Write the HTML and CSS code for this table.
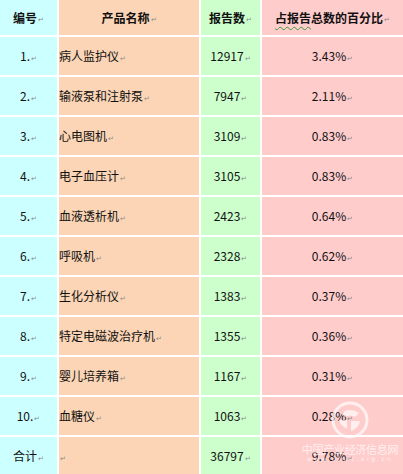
FILE: index.html
```html
<!DOCTYPE html>
<html>
<head>
<meta charset="utf-8">
<link rel="stylesheet" href="styles.css">
</head>
<body>
<div class="page">
  <div class="grid">
    <div class="c c1 head">编号<span class="pm">↵</span></div>
    <div class="c c2 head center">产品名称<span class="pm">↵</span></div>
    <div class="c c3 head">报告数<span class="pm">↵</span></div>
    <div class="c c4 head"><span class="wavy">占报告</span>总数的百分比<span class="pm">↵</span></div>

    <div class="c c1">1.<span class="pm">↵</span></div>
    <div class="c c2">病人监护仪<span class="pm">↵</span></div>
    <div class="c c3">12917<span class="pm">↵</span></div>
    <div class="c c4">3.43%<span class="pm">↵</span></div>

    <div class="c c1">2.<span class="pm">↵</span></div>
    <div class="c c2">输液泵和注射泵<span class="pm">↵</span></div>
    <div class="c c3">7947<span class="pm">↵</span></div>
    <div class="c c4">2.11%<span class="pm">↵</span></div>

    <div class="c c1">3.<span class="pm">↵</span></div>
    <div class="c c2">心电图机<span class="pm">↵</span></div>
    <div class="c c3">3109<span class="pm">↵</span></div>
    <div class="c c4">0.83%<span class="pm">↵</span></div>

    <div class="c c1">4.<span class="pm">↵</span></div>
    <div class="c c2">电子血压计<span class="pm">↵</span></div>
    <div class="c c3">3105<span class="pm">↵</span></div>
    <div class="c c4">0.83%<span class="pm">↵</span></div>

    <div class="c c1">5.<span class="pm">↵</span></div>
    <div class="c c2">血液透析机<span class="pm">↵</span></div>
    <div class="c c3">2423<span class="pm">↵</span></div>
    <div class="c c4">0.64%<span class="pm">↵</span></div>

    <div class="c c1">6.<span class="pm">↵</span></div>
    <div class="c c2">呼吸机<span class="pm">↵</span></div>
    <div class="c c3">2328<span class="pm">↵</span></div>
    <div class="c c4">0.62%<span class="pm">↵</span></div>

    <div class="c c1">7.<span class="pm">↵</span></div>
    <div class="c c2">生化分析仪<span class="pm">↵</span></div>
    <div class="c c3">1383<span class="pm">↵</span></div>
    <div class="c c4">0.37%<span class="pm">↵</span></div>

    <div class="c c1">8.<span class="pm">↵</span></div>
    <div class="c c2">特定电磁波治疗机<span class="pm">↵</span></div>
    <div class="c c3">1355<span class="pm">↵</span></div>
    <div class="c c4">0.36%<span class="pm">↵</span></div>

    <div class="c c1">9.<span class="pm">↵</span></div>
    <div class="c c2">婴儿培养箱<span class="pm">↵</span></div>
    <div class="c c3">1167<span class="pm">↵</span></div>
    <div class="c c4">0.31%<span class="pm">↵</span></div>

    <div class="c c1">10.<span class="pm">↵</span></div>
    <div class="c c2">血糖仪<span class="pm">↵</span></div>
    <div class="c c3">1063<span class="pm">↵</span></div>
    <div class="c c4">0.28%<span class="pm">↵</span></div>

    <div class="c c1">合计<span class="pm">↵</span></div>
    <div class="c c2"><span class="pm">↵</span></div>
    <div class="c c3">36797<span class="pm">↵</span></div>
    <div class="c c4">9.78%<span class="pm">↵</span></div>
  </div>

  <div class="watermark">
    <svg class="wm-logo" width="38" height="38" viewBox="0 0 38 38">
      <circle cx="19" cy="19" r="17" fill="none" stroke="#fff" stroke-width="3"/>
      <path d="M10 12 Q19 6 28 12 L24 16 Q19 13 14 16 Z" fill="#fff"/>
      <path d="M8 19 L16 19 L16 28 Q10 25 8 19 Z" fill="#fff"/>
      <path d="M20 20 L29 20 Q28 27 20 30 Z" fill="#fff"/>
    </svg>
    <div class="wm-cn">中国产业经济信息网</div>
    <div class="wm-en">www.cinic.org.cn</div>
  </div>
</div>
</body>
</html>
```

FILE: styles.css
```css
html, body {
  margin: 0;
  padding: 0;
  background: #ffffff;
}
.page {
  position: relative;
  width: 403px;
  height: 474px;
  overflow: hidden;
}
.grid {
  display: grid;
  grid-template-columns: 57px 140px 59px 1fr;
  grid-template-rows: 35px repeat(11, 38px);
  column-gap: 2px;
  row-gap: 2px;
  background: #ffffff;
  font-family: "Noto Sans CJK SC", "Noto Sans", sans-serif;
  font-size: 12px;
  color: #111;
}
.c {
  display: flex;
  align-items: center;
  justify-content: center;
  white-space: nowrap;
  line-height: 1;
}
.c1 { background: #ccffff; }
.c2 { background: #fbd5b5; justify-content: flex-start; padding-left: 0; }
.c3 { background: #ccffcc; }
.c4 { background: #ffcccc; }
.c2.center { justify-content: center; }
.head { font-weight: bold; }
.pm {
  font-size: 7px;
  color: #8a8a8a;
  font-weight: normal;
  margin-left: 1px;
  align-self: center;
  position: relative;
  top: 2px;
}
.wavy {
  text-decoration: underline wavy #3a9a3a;
  text-decoration-thickness: 1px;
  text-underline-offset: 3px;
}
.watermark {
  position: absolute;
  left: 300px;
  top: 401px;
  width: 100px;
  display: flex;
  flex-direction: column;
  align-items: center;
  opacity: 0.7;
  pointer-events: none;
}
.wm-logo {
  display: block;
}
.wm-cn {
  font-family: "Noto Sans CJK SC", sans-serif;
  font-size: 11px;
  color: #fff;
  line-height: 12px;
  margin-top: 4px;
  letter-spacing: -0.3px;
}
.wm-en {
  font-family: "DejaVu Sans", sans-serif;
  font-size: 6px;
  color: #fff;
  letter-spacing: 2.2px;
  line-height: 8px;
}
```
